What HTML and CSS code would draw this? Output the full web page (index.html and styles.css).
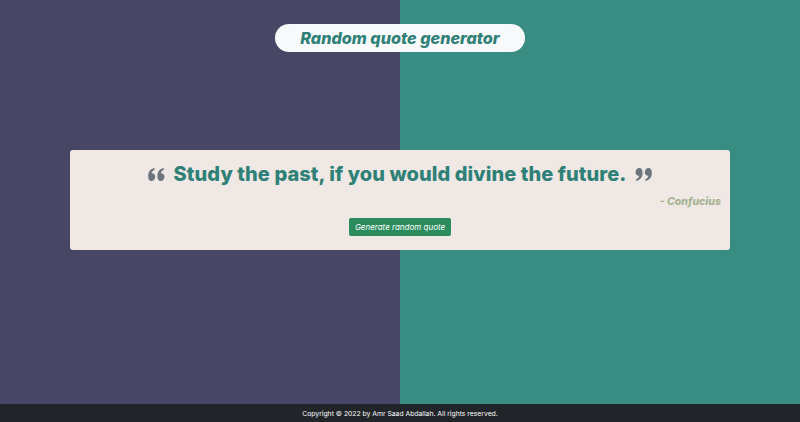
FILE: index.html
```html
<!DOCTYPE html>
<html lang="en">
<head>
<meta charset="utf-8">
<title>Random quote generator</title>
<link rel="stylesheet" href="styles.css">
</head>
<body>
<main class="main">
  <h1 class="title">Random quote generator</h1>
  <section class="card">
    <p class="quote">
      <svg class="qicon" viewBox="0 0 18 14" width="17" height="13"><path d="M0 8.5C0 4 2.5 1 6.5 0l.8 1.6C5 2.6 3.9 4 3.7 5.6 5.8 5.4 7.6 6.9 7.6 9.3 7.6 11.9 5.8 14 3.6 14 1.3 14 0 12 0 8.5ZM10 8.5C10 4 12.5 1 16.5 0l.8 1.6C15 2.6 13.9 4 13.7 5.6 15.8 5.4 17.6 6.9 17.6 9.3 17.6 11.9 15.8 14 13.6 14 11.3 14 10 12 10 8.5Z" fill="#6c757d"/></svg>
      <span class="qtext">Study the past, if you would divine the future.</span>
      <svg class="qicon" viewBox="0 0 18 14" width="17" height="13"><g transform="rotate(180 9 7)"><path d="M0 8.5C0 4 2.5 1 6.5 0l.8 1.6C5 2.6 3.9 4 3.7 5.6 5.8 5.4 7.6 6.9 7.6 9.3 7.6 11.9 5.8 14 3.6 14 1.3 14 0 12 0 8.5ZM10 8.5C10 4 12.5 1 16.5 0l.8 1.6C15 2.6 13.9 4 13.7 5.6 15.8 5.4 17.6 6.9 17.6 9.3 17.6 11.9 15.8 14 13.6 14 11.3 14 10 12 10 8.5Z" fill="#6c757d"/></g></svg>
    </p>
    <p class="author">- Confucius</p>
    <div class="actions"><button class="btn">Generate random quote</button></div>
  </section>
</main>
<footer class="footer">Copyright © 2022 by Amr Saad Abdallah. All rights reserved.</footer>
</body>
</html>
```

FILE: styles.css
```css
* { box-sizing: border-box; }
html, body { margin: 0; padding: 0; height: 100%; }
body {
  font-family: "Inter", "Open Sans", sans-serif;
  background: linear-gradient(to right, #474665 50%, #398c82 50%);
  display: flex;
  flex-direction: column;
}
.main {
  flex: 1;
  display: flex;
  flex-direction: column;
  align-items: center;
  padding-top: 24px;
}
.title {
  margin: 0;
  width: 250px;
  height: 28px;
  background: #f8f9fa;
  border-radius: 14px;
  color: #2f8077;
  font-size: 16.2px;
  font-style: italic;
  font-weight: 800;
  display: flex;
  align-items: center;
  justify-content: center;
}
.card {
  margin-top: 98px;
  width: 660px;
  height: 100px;
  background: #efe8e4;
  border-radius: 3px;
  padding: 11px 9px 12px;
  display: flex;
  flex-direction: column;
}
.quote {
  margin: 0;
  display: flex;
  align-items: center;
  justify-content: center;
  gap: 9px;
  height: 26px;
}
.qtext {
  color: #2f8077;
  font-size: 20px;
  font-weight: 800;
  letter-spacing: 0.07px;
}
.qicon { flex: none; }
.author {
  margin: 8px 0 0;
  text-align: right;
  color: #a6b393;
  font-size: 10.5px;
  font-style: italic;
  font-weight: 800;
}
.actions {
  margin-top: 10px;
  display: flex;
  justify-content: center;
}
.btn {
  border: 0;
  background: #2a8c5c;
  color: #fff;
  font-family: inherit;
  font-style: italic;
  font-size: 8px;
  width: 102px;
  height: 18px;
  border-radius: 2px;
  padding: 0;
}
.footer {
  height: 18px;
  background: #212529;
  color: #fff;
  font-size: 6.8px;
  display: flex;
  align-items: center;
  justify-content: center;
}
```
